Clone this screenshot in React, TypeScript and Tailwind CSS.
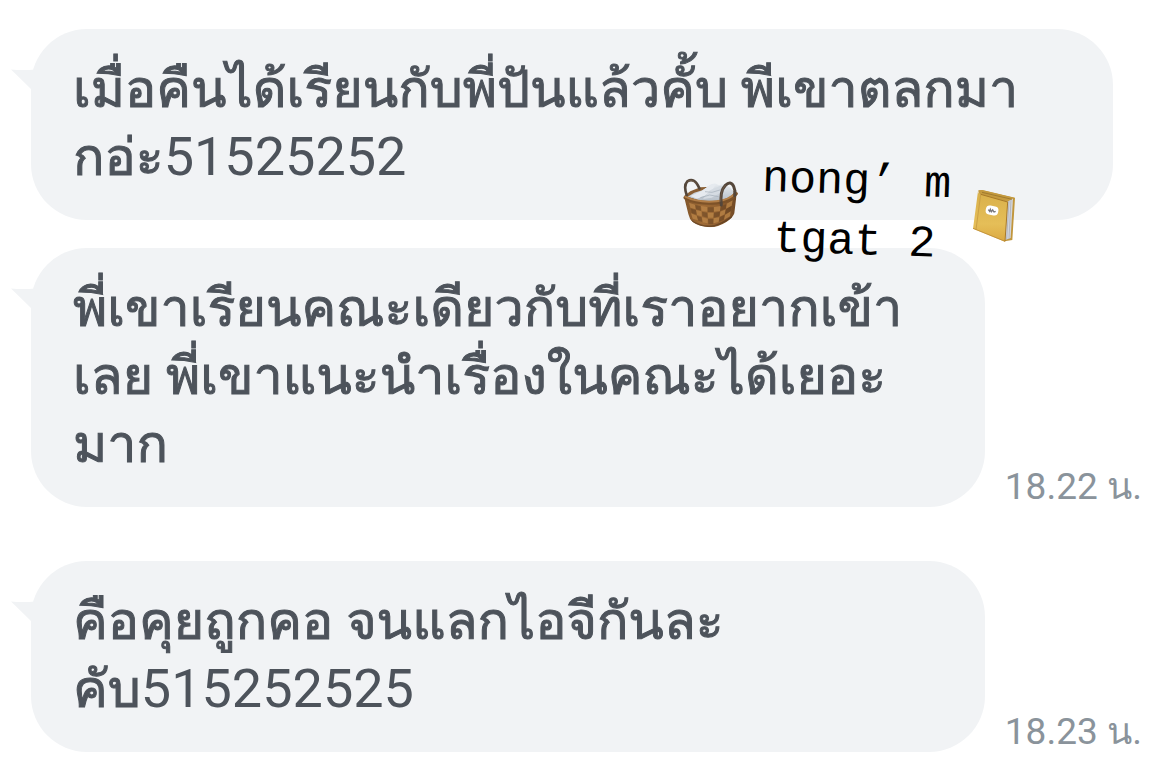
import type { ReactNode } from "react";

function Num({ children }: { children: string }) {
  return <span className="text-[54px] leading-none [-webkit-text-stroke:0]">{children}</span>;
}

function Tail() {
  return (
    <svg className="absolute top-10 -left-5 h-6 w-6" viewBox="0 0 24 24" aria-hidden="true">
      <path d="M0 0.5Q12 1.5 24 0.5L24 24Q17 17 0 0.5Z" fill="#f1f3f5" />
    </svg>
  );
}

function Bubble({ children }: { children: ReactNode }) {
  return (
    <div className="relative min-w-0 flex-1 rounded-[56px] bg-[#f1f3f5] px-[42px] pt-[27px] pb-7 text-[52px] leading-[68px] text-[#4d535b] [-webkit-text-stroke:1px]">
      <Tail />
      {children}
    </div>
  );
}

function Time({ children }: { children: string }) {
  return <time className="shrink-0 text-[37px] leading-10 text-[#8a939b]">{children}</time>;
}

function Basket() {
  return (
    <svg className="mt-6 h-[52px] w-14 shrink-0" viewBox="38 36 168 156" role="img" aria-label="ตะกร้า">
      <defs>
        <linearGradient id="wicker" x1="0" x2="1">
          <stop offset="0" stopColor="#7c5229" />
          <stop offset=".35" stopColor="#a06d38" />
          <stop offset=".7" stopColor="#8f5e2f" />
          <stop offset="1" stopColor="#6a4524" />
        </linearGradient>
        <linearGradient id="cloth" x1="0" y1="0" x2="0" y2="1">
          <stop offset="0" stopColor="#e9edf1" />
          <stop offset="1" stopColor="#b6bfc9" />
        </linearGradient>
        <clipPath id="body">
          <path d="M42 98Q85 121 146 114Q178 108 199 86L192 145Q188 158 168 171Q142 187 120 187Q86 185 67 171Q57 162 54 147Z" />
        </clipPath>
      </defs>
      <path d="M42 92L60 79L90 67L160 64L199 84L190 108L130 117L72 109Z" fill="#8a5f35" />
      <path d="M52 95L72 83L96 76L112 65L122 58L134 55L146 61L160 57L180 68L194 86L182 101L145 108L90 107Z" fill="url(#cloth)" />
      <path d="M60 93L94 78L118 61L137 58L126 75L103 92L80 101Z" fill="#e6eaef" />
      <path d="M119 76L148 63L165 62L158 79L124 98L98 102Z" fill="#d5dbe2" />
      <path d="M104 80L125 82L152 74M90 98L118 90L145 95" fill="none" stroke="#a3adb8" strokeWidth="2" />
      <g clipPath="url(#body)">
        <rect x="36" y="80" width="168" height="112" fill="url(#wicker)" />
        <g fill="#b98548" opacity=".8">
          <path d="M56 113L74 119L76 133L60 128ZM92 123L111 126V140L94 137ZM131 126L151 123L149 138L131 140ZM169 116L187 106L184 122L167 131Z" />
          <path d="M77 135L93 139L94 154L80 150ZM112 143H130L129 158H113ZM150 140L166 133L163 148L148 155Z" />
          <path d="M62 145L79 152L83 166L67 161ZM95 157L112 161V175L97 172ZM130 160L147 157L145 171L129 175ZM164 150L181 139L179 154L161 164Z" />
        </g>
        <g fill="#634122" opacity=".5">
          <path d="M75 120L91 124L92 137L77 133ZM112 127H130V141H112ZM151 124L168 118L166 131L149 138Z" />
          <path d="M62 131L77 135L79 149L64 144ZM95 140L111 143L112 158L96 154ZM131 143L149 140L147 154L130 158ZM167 133L183 124L181 138L164 148Z" />
          <path d="M80 153L94 157L96 171L84 167ZM113 162H129V178H114ZM148 157L163 150L160 164L145 171Z" />
        </g>
        <path d="M60 166Q86 183 118 184Q145 184 186 155" fill="none" stroke="#54371e" strokeWidth="5" opacity=".6" />
      </g>
      <path d="M45 98Q82 118 139 113Q180 109 197 86" fill="none" stroke="#7d5228" strokeWidth="11" strokeLinecap="round" />
      <path d="M45 95Q82 114 139 109Q178 105 196 83" fill="none" stroke="#b37f48" strokeWidth="6" strokeLinecap="round" />
      <path d="M49 90Q39 61 51 49Q73 36 87 70" fill="none" stroke="#54463a" strokeWidth="8" strokeLinecap="round" />
      <path d="M153 120Q148 78 165 61Q181 46 190 64Q196 77 193 92" fill="none" stroke="#54463a" strokeWidth="9" strokeLinecap="round" />
      <path d="M151 110Q150 77 166 60M52 49Q66 41 79 58" fill="none" stroke="#7b6551" strokeWidth="2" />
    </svg>
  );
}

function Book() {
  return (
    <svg className="mt-9 h-[54px] w-11 shrink-0" viewBox="36 30 132 162" role="img" aria-label="สมุด">
      <defs>
        <linearGradient id="cover" x1="0" y1="0" x2="0" y2="1">
          <stop offset="0" stopColor="#d9b04a" />
          <stop offset=".65" stopColor="#e5be58" />
          <stop offset="1" stopColor="#dba941" />
        </linearGradient>
      </defs>
      <path d="M55 34L67 33L165 56L157 183L134 187L126 174Z" fill="#c1963c" />
      <path d="M132 66L159 58L152 177L133 184Z" fill="#d3d5db" />
      <path d="M147 65L140 181M153 62L147 179" stroke="#a5a8b0" strokeWidth="2" />
      <path d="M55 35L68 34L162 56L156 60L140 70L58 46Z" fill="#c49a3f" />
      <path d="M66 40L156 61" stroke="#8f6b25" strokeWidth="2" />
      <path d="M54 37Q54 44 62 46L143 69L135 188L39 149Z" fill="url(#cover)" />
      <path d="M62 47L48 152" stroke="#cba045" strokeWidth="3" />
      <path d="M62 46L143 69L135 187" fill="none" stroke="#a87928" strokeWidth="3" />
      <path d="M39 148L135 187" stroke="#b5842f" strokeWidth="2" />
      <rect x="77" y="81" width="38" height="27" rx="12" fill="#fff" transform="rotate(12 96 95)" />
      <path d="M85 92L89 97L91 91L94 98L98 93L102 99L107 97" fill="none" stroke="#77777c" strokeWidth="4" />
    </svg>
  );
}

function Sticker() {
  return (
    <div className="absolute top-[124px] right-[97px] z-10 flex items-start gap-[22px]">
      <Basket />
      <p className="rotate-2 text-center font-['Liberation_Mono',monospace] text-[45px] leading-[60px] whitespace-nowrap text-black">
        nong’ m<br />tgat 2
      </p>
      <Book />
    </div>
  );
}

export default function App() {
  return (
    <main lang="th" className="bg-white pt-[29px] pr-7 pb-4 pl-[31px] font-['Roboto','Loma',sans-serif]">
      <article className="relative mr-[29px] flex">
        <Bubble>
          <p>
            เมื่อคืนได้เรียนกับพี่ปันแล้วคั้บ พีเขาตลกมา<br />
            กอ่ะ<Num>51525252</Num>
          </p>
        </Bubble>
        <Sticker />
      </article>
      <article className="mt-7 flex items-end gap-5">
        <Bubble>
          <p>
            พี่เขาเรียนคณะเดียวกับที่เราอยากเข้า<br />
            เลย พี่เขาแนะนำเรื่องในคณะได้เยอะ<br />
            มาก
          </p>
        </Bubble>
        <Time>18.22 น.</Time>
      </article>
      <article className="mt-[54px] flex items-end gap-5">
        <Bubble>
          <p>
            คือคุยถูกคอ จนแลกไอจีกันละ<br />
            คับ<Num>515252525</Num>
          </p>
        </Bubble>
        <Time>18.23 น.</Time>
      </article>
    </main>
  );
}
